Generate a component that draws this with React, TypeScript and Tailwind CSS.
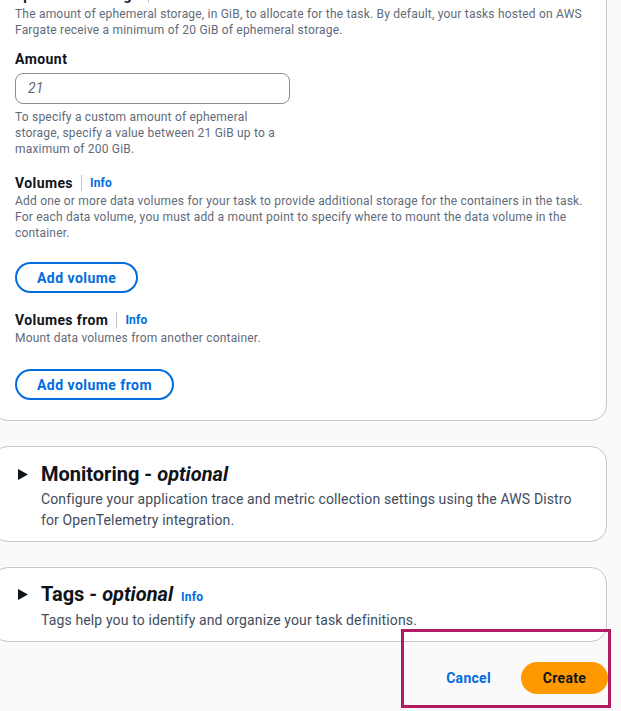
import React from "react";

const font = { fontFamily: "Roboto, 'Liberation Sans', Arial, sans-serif" };

function Caret() {
  return (
    <svg width="10" height="11" viewBox="0 0 10 11" className="shrink-0">
      <polygon points="0,0 10,5.5 0,11" fill="#0f141a" />
    </svg>
  );
}

function InfoHeading({ title }: { title: string }) {
  return (
    <div className="flex items-center h-[18px]">
      <span className="text-[14px] leading-[18px] font-bold tracking-[0.4px] text-[#0f141a]">{title}</span>
      <span className="mx-2 h-[16px] w-px bg-[#c6c6cd]" />
      <span className="text-[12px] leading-[16px] font-bold tracking-[0.2px] text-[#006ce0]">Info</span>
    </div>
  );
}

function OutlineButton({ label }: { label: string }) {
  return (
    <button className="h-[31px] rounded-full border-2 border-[#006ce0] bg-white px-[20px] text-[14px] font-bold leading-[18px] tracking-[0.45px] text-[#006ce0]">
      {label}
    </button>
  );
}

export default function App() {
  return (
    <div className="relative w-[621px] h-[711px] overflow-hidden bg-[#fafafa]" style={font}>
      <div className="ml-[-8px] mr-[14px] flex flex-col">
        {/* Card 1 */}
        <div className="mt-[-34px] rounded-[16px] border border-[#c6c6cd] bg-white pl-[22px] pr-[20px] pt-[19px] pb-[20px]">
          <InfoHeading title="Ephemeral storage" />
          <p className="mt-[2px] whitespace-nowrap text-[12px] leading-[16px] tracking-[0.2px] text-[#5f6b7a]">
            The amount of ephemeral storage, in GiB, to allocate for the task. By default, your tasks hosted on AWS
            <br />
            Fargate receive a minimum of 20 GiB of ephemeral storage.
          </p>

          <div className="mt-[12px] text-[14px] leading-[18px] font-bold tracking-[0.45px] text-[#0f141a]">Amount</div>
          <div className="mt-[5px] flex h-[31px] w-[275px] items-center rounded-[8px] border border-[#8c8c94] bg-white px-[12px]">
            <span className="text-[14px] italic text-[#656871]">21</span>
          </div>
          <p className="mt-[5px] whitespace-nowrap text-[12px] leading-[16px] tracking-[0.2px] text-[#5f6b7a]">
            To specify a custom amount of ephemeral
            <br />
            storage, specify a value between 21 GiB up to a
            <br />
            maximum of 200 GiB.
          </p>

          <div className="mt-[17px]">
            <InfoHeading title="Volumes" />
          </div>
          <p className="mt-[1px] whitespace-nowrap text-[12px] leading-[16px] tracking-[0.2px] text-[#5f6b7a]">
            Add one or more data volumes for your task to provide additional storage for the containers in the task.
            <br />
            For each data volume, you must add a mount point to specify where to mount the data volume in the
            <br />
            container.
          </p>
          <div className="mt-[21px]">
            <OutlineButton label="Add volume" />
          </div>

          <div className="mt-[18px]">
            <InfoHeading title="Volumes from" />
          </div>
          <p className="mt-[1px] text-[12px] leading-[16px] tracking-[0.2px] text-[#5f6b7a]">
            Mount data volumes from another container.
          </p>
          <div className="mt-[23px]">
            <OutlineButton label="Add volume from" />
          </div>
        </div>

        {/* Card 2 */}
        <div className="mt-[25px] rounded-[16px] border border-[#c6c6cd] bg-white pl-[25px] pr-[20px] pt-[16px] pb-[10px]">
          <div className="flex items-center h-[22px]">
            <Caret />
            <span className="ml-[13px] text-[20px] leading-[22px] font-bold text-[#0f141a]">
              Monitoring - <i>optional</i>
            </span>
          </div>
          <p className="mt-[4px] pl-[23px] whitespace-nowrap text-[14px] leading-[21px] tracking-[0.13px] text-[#414d5c]">
            Configure your application trace and metric collection settings using the AWS Distro
            <br />
            for OpenTelemetry integration.
          </p>
        </div>

        {/* Card 3 */}
        <div className="mt-[25px] rounded-[16px] border border-[#c6c6cd] bg-white pl-[25px] pr-[20px] pt-[15px] pb-[11px]">
          <div className="flex items-center h-[22px]">
            <Caret />
            <span className="ml-[13px] text-[20px] leading-[22px] font-bold text-[#0f141a]">
              Tags - <i>optional</i>
            </span>
            <span className="ml-[8px] mt-[5px] text-[12px] leading-[16px] font-bold tracking-[0.2px] text-[#006ce0]">
              Info
            </span>
          </div>
          <p className="mt-[5px] pl-[23px] whitespace-nowrap text-[14px] leading-[20px] tracking-[0.13px] text-[#414d5c]">
            Tags help you to identify and organize your task definitions.
          </p>
        </div>

        {/* Footer */}
        <div className="mt-[20px] mr-[-1px] flex items-center justify-end gap-[10px]">
          <button className="h-[32px] px-[20px] text-[14px] font-bold tracking-[0.3px] text-[#006ce0]">Cancel</button>
          <button className="h-[32px] w-[87px] rounded-full bg-[#ff9900] text-[14px] font-bold tracking-[0.3px] text-[#0f141a]">
            Create
          </button>
        </div>
      </div>

      {/* Annotation overlay */}
      <div className="absolute left-[401px] top-[629px] h-[79px] w-[210px] border-[3px] border-[#b01b62]" />
    </div>
  );
}
